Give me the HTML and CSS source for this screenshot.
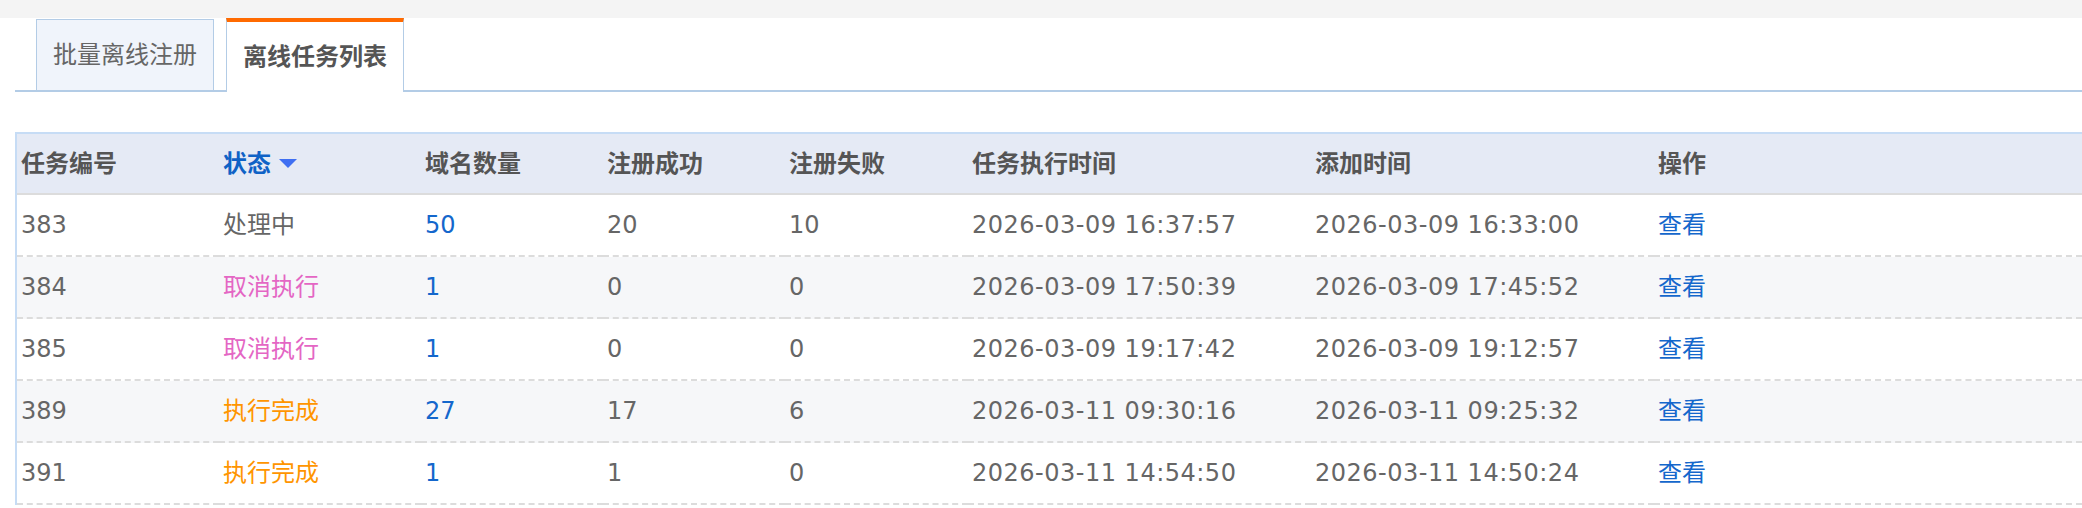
FILE: index.html
```html
<!DOCTYPE html>
<html lang="zh">
<head>
  <meta charset="UTF-8">
  <meta name="viewport" content="width=device-width, initial-scale=1">
  <title>离线任务列表</title>
  <link rel="stylesheet" href="styles.css">
</head>
<body>
  <div class="topbar"></div>

  <!-- 标签页 -->
  <div class="tabs">
    <a class="tab" href="#">批量离线注册</a>
    <a class="tab active" href="#">离线任务列表</a>
  </div>

  <!-- 任务列表 -->
  <div class="table-wrap">
    <table class="task-table">
      <colgroup>
        <col style="width: 202px">
        <col style="width: 202px">
        <col style="width: 182px">
        <col style="width: 182px">
        <col style="width: 183px">
        <col style="width: 343px">
        <col style="width: 343px">
        <col>
      </colgroup>
      <thead>
        <tr>
          <th>任务编号</th>
          <th><a class="sort" href="#">状态<span class="caret"></span></a></th>
          <th>域名数量</th>
          <th>注册成功</th>
          <th>注册失败</th>
          <th>任务执行时间</th>
          <th>添加时间</th>
          <th>操作</th>
        </tr>
      </thead>
      <tbody>
        <tr>
          <td>383</td>
          <td>处理中</td>
          <td><a class="link" href="#">50</a></td>
          <td>20</td>
          <td>10</td>
          <td class="time">2026-03-09 16:37:57</td>
          <td class="time">2026-03-09 16:33:00</td>
          <td><a class="link" href="#">查看</a></td>
        </tr>
        <tr>
          <td>384</td>
          <td class="st-cancel">取消执行</td>
          <td><a class="link" href="#">1</a></td>
          <td>0</td>
          <td>0</td>
          <td class="time">2026-03-09 17:50:39</td>
          <td class="time">2026-03-09 17:45:52</td>
          <td><a class="link" href="#">查看</a></td>
        </tr>
        <tr>
          <td>385</td>
          <td class="st-cancel">取消执行</td>
          <td><a class="link" href="#">1</a></td>
          <td>0</td>
          <td>0</td>
          <td class="time">2026-03-09 19:17:42</td>
          <td class="time">2026-03-09 19:12:57</td>
          <td><a class="link" href="#">查看</a></td>
        </tr>
        <tr>
          <td>389</td>
          <td class="st-done">执行完成</td>
          <td><a class="link" href="#">27</a></td>
          <td>17</td>
          <td>6</td>
          <td class="time">2026-03-11 09:30:16</td>
          <td class="time">2026-03-11 09:25:32</td>
          <td><a class="link" href="#">查看</a></td>
        </tr>
        <tr>
          <td>391</td>
          <td class="st-done">执行完成</td>
          <td><a class="link" href="#">1</a></td>
          <td>1</td>
          <td>0</td>
          <td class="time">2026-03-11 14:54:50</td>
          <td class="time">2026-03-11 14:50:24</td>
          <td><a class="link" href="#">查看</a></td>
        </tr>
      </tbody>
    </table>
  </div>
</body>
</html>
```

FILE: styles.css
```css
/* 全局设置 */
* {
  box-sizing: border-box;
  margin: 0;
  padding: 0;
}
html, body {
  height: 100%;
  overflow: hidden;
}
body {
  font-family: "DejaVu Sans", "Noto Sans CJK SC", sans-serif;
  font-size: 24px;
  line-height: 30px;
  color: #666;
  background: #fff;
}
a {
  text-decoration: none;
}

.topbar {
  height: 18px;
  background: #f4f4f4;
}

/* 标签页 */
.tabs {
  display: flex;
  align-items: flex-end;
  gap: 12px;
  height: 74px;
  margin-left: 15px;
  padding-left: 21px;
  border-bottom: 2px solid #b3cce6;
}
.tab {
  display: flex;
  align-items: center;
  height: 71px;
  padding: 0 16px;
  color: #666;
  background: #f0f4fb;
  border: 1px solid #b3cce6;
  border-bottom: none;
}
.tab.active {
  height: 74px;
  margin-bottom: -2px;
  color: #555;
  font-weight: bold;
  background: #fff;
  border-top: 4px solid #ff6a00;
}

/* 表格 */
.table-wrap {
  margin: 40px 0 0 15px;
}
.task-table {
  width: 100%;
  table-layout: fixed;
  border-collapse: separate;
  border-spacing: 0;
  border-top: 2px solid #c6dcf5;
  border-left: 2px solid #c6dcf5;
}
.task-table th,
.task-table td {
  padding: 0 0 0 4px;
  text-align: left;
  vertical-align: middle;
  white-space: nowrap;
  line-height: 30px;
}
.task-table thead tr {
  background: #e5eaf5;
}
.task-table th {
  height: 61px;
  color: #555;
  font-weight: bold;
  border-bottom: 2px solid #dcdcdc;
}
.task-table td {
  height: 62px;
  border-bottom: 2px dashed #dcdcdc;
}
.task-table tbody tr:nth-child(even) {
  background: #f6f7f9;
}
.task-table td.time {
  letter-spacing: 0.5px;
}

.sort {
  display: inline-flex;
  align-items: center;
  color: #0f62c6;
}
.caret {
  width: 0;
  height: 0;
  margin-left: 8px;
  border-left: 9px solid transparent;
  border-right: 9px solid transparent;
  border-top: 9px solid #3f6ff2;
}
.link {
  color: #1467cc;
}
.st-cancel {
  color: #e466c4;
}
.st-done {
  color: #ff9500;
}
```
